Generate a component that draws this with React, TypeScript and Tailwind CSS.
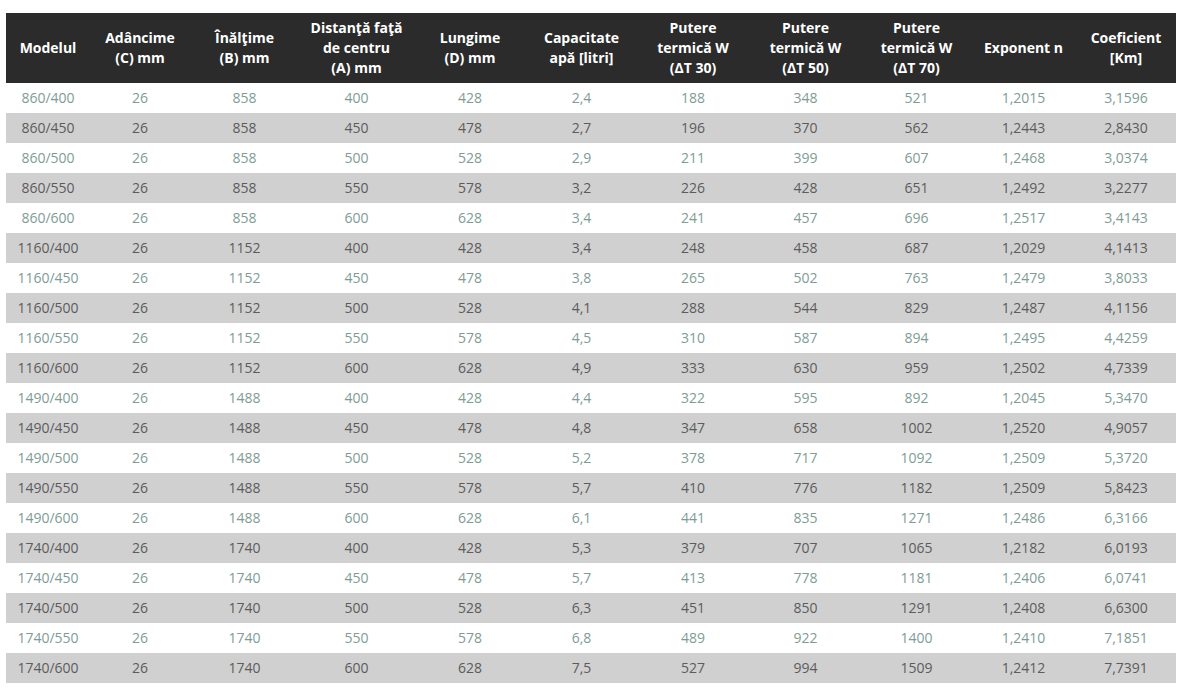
const headers: string[][] = [
  ["Modelul"],
  ["Adâncime", "(C) mm"],
  ["Înălţime", "(B) mm"],
  ["Distanţă faţă", "de centru", "(A) mm"],
  ["Lungime", "(D) mm"],
  ["Capacitate", "apă [litri]"],
  ["Putere", "termică W", "(ΔT 30)"],
  ["Putere", "termică W", "(ΔT 50)"],
  ["Putere", "termică W", "(ΔT 70)"],
  ["Exponent n"],
  ["Coeficient", "[Km]"],
];

const widths = [84, 100, 109, 115, 112, 111, 112, 113, 109, 105, 100];

const rows: string[][] = [
  ["860/400", "26", "858", "400", "428", "2,4", "188", "348", "521", "1,2015", "3,1596"],
  ["860/450", "26", "858", "450", "478", "2,7", "196", "370", "562", "1,2443", "2,8430"],
  ["860/500", "26", "858", "500", "528", "2,9", "211", "399", "607", "1,2468", "3,0374"],
  ["860/550", "26", "858", "550", "578", "3,2", "226", "428", "651", "1,2492", "3,2277"],
  ["860/600", "26", "858", "600", "628", "3,4", "241", "457", "696", "1,2517", "3,4143"],
  ["1160/400", "26", "1152", "400", "428", "3,4", "248", "458", "687", "1,2029", "4,1413"],
  ["1160/450", "26", "1152", "450", "478", "3,8", "265", "502", "763", "1,2479", "3,8033"],
  ["1160/500", "26", "1152", "500", "528", "4,1", "288", "544", "829", "1,2487", "4,1156"],
  ["1160/550", "26", "1152", "550", "578", "4,5", "310", "587", "894", "1,2495", "4,4259"],
  ["1160/600", "26", "1152", "600", "628", "4,9", "333", "630", "959", "1,2502", "4,7339"],
  ["1490/400", "26", "1488", "400", "428", "4,4", "322", "595", "892", "1,2045", "5,3470"],
  ["1490/450", "26", "1488", "450", "478", "4,8", "347", "658", "1002", "1,2520", "4,9057"],
  ["1490/500", "26", "1488", "500", "528", "5,2", "378", "717", "1092", "1,2509", "5,3720"],
  ["1490/550", "26", "1488", "550", "578", "5,7", "410", "776", "1182", "1,2509", "5,8423"],
  ["1490/600", "26", "1488", "600", "628", "6,1", "441", "835", "1271", "1,2486", "6,3166"],
  ["1740/400", "26", "1740", "400", "428", "5,3", "379", "707", "1065", "1,2182", "6,0193"],
  ["1740/450", "26", "1740", "450", "478", "5,7", "413", "778", "1181", "1,2406", "6,0741"],
  ["1740/500", "26", "1740", "500", "528", "6,3", "451", "850", "1291", "1,2408", "6,6300"],
  ["1740/550", "26", "1740", "550", "578", "6,8", "489", "922", "1400", "1,2410", "7,1851"],
  ["1740/600", "26", "1740", "600", "628", "7,5", "527", "994", "1509", "1,2412", "7,7391"],
];

export default function App() {
  return (
    <div className="min-h-[690px] bg-white pl-[6px] pt-[13px] font-['Open_Sans',sans-serif]">
      <table className="w-[1170px] table-fixed border-collapse text-center text-[14px]">
        <colgroup>
          {widths.map((w, i) => (
            <col key={i} style={{ width: w }} />
          ))}
        </colgroup>
        <thead>
          <tr className="h-[70px] bg-[#2b2b2b] text-white">
            {headers.map((lines, i) => (
              <th key={i} className="px-1 align-middle font-bold leading-[20px]">
                {lines.map((l, j) => (
                  <div key={j}>{l}</div>
                ))}
              </th>
            ))}
          </tr>
        </thead>
        <tbody>
          {rows.map((r, i) => (
            <tr
              key={r[0]}
              className={
                i % 2 === 0
                  ? "h-[30px] bg-white text-[#7e9c95]"
                  : "h-[30px] bg-[#d0d0d0] text-[#5c5c5c]"
              }
            >
              {r.map((c, j) => (
                <td key={j} className="p-0 align-middle leading-[20px]">
                  {c}
                </td>
              ))}
            </tr>
          ))}
        </tbody>
      </table>
    </div>
  );
}
